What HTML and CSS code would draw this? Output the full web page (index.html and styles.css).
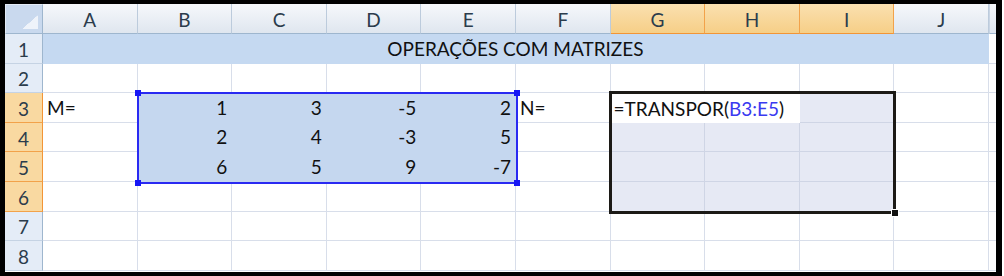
FILE: index.html
```html
<!DOCTYPE html>
<html lang="pt">
<head>
  <meta charset="UTF-8" />
  <title>Operações com matrizes</title>
  <link rel="stylesheet" href="styles.css">
</head>
<body>
  <div class="frame">
    <div class="sheet">
      <div class="grid">
        <div class="corner"></div>
        <div class="col-head">A</div>
        <div class="col-head">B</div>
        <div class="col-head">C</div>
        <div class="col-head">D</div>
        <div class="col-head">E</div>
        <div class="col-head">F</div>
        <div class="col-head on">G</div>
        <div class="col-head on">H</div>
        <div class="col-head on">I</div>
        <div class="col-head">J</div>
        <div class="col-head stub"></div>

        <div class="row-head">1</div>
        <div class="cell title">OPERAÇÕES COM MATRIZES</div>
        <div class="cell stub"></div>

        <div class="row-head">2</div>
        <div class="cell"></div><div class="cell"></div><div class="cell"></div><div class="cell"></div><div class="cell"></div>
        <div class="cell"></div><div class="cell"></div><div class="cell"></div><div class="cell"></div><div class="cell"></div>
        <div class="cell stub"></div>

        <div class="row-head on">3</div>
        <div class="cell">M=</div>
        <div class="cell fill num">1</div><div class="cell fill num">3</div><div class="cell fill num">-5</div><div class="cell fill num">2</div>
        <div class="cell">N=</div>
        <div class="cell pick"></div><div class="cell pick"></div><div class="cell pick"></div>
        <div class="cell"></div>
        <div class="cell stub"></div>

        <div class="row-head on">4</div>
        <div class="cell"></div>
        <div class="cell fill num">2</div><div class="cell fill num">4</div><div class="cell fill num">-3</div><div class="cell fill num">5</div>
        <div class="cell"></div>
        <div class="cell pick"></div><div class="cell pick"></div><div class="cell pick"></div>
        <div class="cell"></div>
        <div class="cell stub"></div>

        <div class="row-head on">5</div>
        <div class="cell"></div>
        <div class="cell fill num">6</div><div class="cell fill num">5</div><div class="cell fill num">9</div><div class="cell fill num">-7</div>
        <div class="cell"></div>
        <div class="cell pick"></div><div class="cell pick"></div><div class="cell pick"></div>
        <div class="cell"></div>
        <div class="cell stub"></div>

        <div class="row-head on">6</div>
        <div class="cell"></div><div class="cell"></div><div class="cell"></div><div class="cell"></div><div class="cell"></div>
        <div class="cell"></div>
        <div class="cell pick"></div><div class="cell pick"></div><div class="cell pick"></div>
        <div class="cell"></div>
        <div class="cell stub"></div>

        <div class="row-head">7</div>
        <div class="cell"></div><div class="cell"></div><div class="cell"></div><div class="cell"></div><div class="cell"></div>
        <div class="cell"></div><div class="cell"></div><div class="cell"></div><div class="cell"></div><div class="cell"></div>
        <div class="cell stub"></div>

        <div class="row-head">8</div>
        <div class="cell"></div><div class="cell"></div><div class="cell"></div><div class="cell"></div><div class="cell"></div>
        <div class="cell"></div><div class="cell"></div><div class="cell"></div><div class="cell"></div><div class="cell"></div>
        <div class="cell stub"></div>
      </div>

      <!-- selections drawn over the cells -->
      <div class="grid marks">
        <div class="range">
          <i class="tl"></i><i class="tr"></i><i class="bl"></i><i class="br"></i>
        </div>
        <div class="editor">=TRANSPOR(<span class="ref">B3:E5</span>)</div>
        <div class="active"><i class="handle"></i></div>
      </div>
    </div>
  </div>
</body>
</html>
```

FILE: styles.css
```css
body {
  margin: 0;
  background: #fff;
  font-family: Lato, "Liberation Sans", sans-serif;
}

.frame {
  width: 991px;
  height: 268px;
  border: 4px solid #000;
  border-left-width: 5px;
  border-right-width: 6px;
  overflow: hidden;
}

.sheet {
  position: relative;
  height: 100%;
}

.grid {
  display: grid;
  grid-template-columns: 38px repeat(10, 94.6px) 1fr;
  grid-template-rows: 30px repeat(8, 29.6px) 1fr;
  height: 100%;
  font-size: 19px;
  color: #111;
}

.corner {
  background: #c9d9ee;
  border: 1px solid #e3ebf6;
  border-right-color: #9eb6ce;
  border-bottom-color: #9eb6ce;
  position: relative;
}

.corner::after {
  content: "";
  position: absolute;
  right: 4px;
  bottom: 4px;
  width: 16px;
  height: 14px;
  background: linear-gradient(to bottom right, transparent 50%, #eef3fa 51%);
}

.col-head {
  display: flex;
  align-items: center;
  justify-content: center;
  background: linear-gradient(#f6f8fb, #dfe6ef);
  border-right: 1px solid #bccbdc;
  border-bottom: 1px solid #9eb6ce;
  color: #2b3c4c;
  padding-top: 1px;
}

.col-head.on {
  background: linear-gradient(#fae0b0, #f6cf87);
  border-right-color: #f2a24a;
  border-bottom-color: #f29536;
}

.col-head.stub {
  border-right: none;
  border-left: 1px solid #c9d5e4;
}

.row-head {
  display: flex;
  align-items: center;
  justify-content: center;
  background: #e4ecf7;
  border-right: 1px solid #9eb6ce;
  border-bottom: 1px solid #c5d3e4;
  color: #2b3c4c;
  padding-top: 2px;
}

.row-head.on {
  background: #f9d9a1;
  border-right-color: #f29536;
  border-bottom-color: #f2a24a;
}

.cell {
  display: flex;
  align-items: flex-end;
  padding: 0 4px 5px;
  border-right: 1px solid #d8deea;
  border-bottom: 1px solid #d8deea;
  line-height: 1;
  white-space: nowrap;
}

.cell.stub {
  border-right: none;
}

.num {
  justify-content: flex-end;
}

.fill {
  background: #c5d7ef;
  border-color: #c5d7ef;
}

.title {
  grid-column: span 10;
  justify-content: center;
  background: #c5d9f1;
  border-color: #c5d9f1;
}

.pick {
  background: #e6e9f4;
  border-color: #cfd5e5;
}

.marks {
  position: absolute;
  inset: 0;
  pointer-events: none;
}

.range {
  grid-column: 3 / 7;
  grid-row: 4 / 7;
  margin: -1px -2px -2px -1px;
  border: 2px solid #2a2af2;
  position: relative;
}

.range i {
  position: absolute;
  width: 6px;
  height: 6px;
  background: #1717f5;
}

.range .tl { left: -4px; top: -4px; }
.range .tr { right: -4px; top: -4px; }
.range .bl { left: -4px; bottom: -4px; }
.range .br { right: -4px; bottom: -4px; }

.editor {
  grid-column: 8 / 10;
  grid-row: 4 / 5;
  display: flex;
  align-items: flex-end;
  padding: 0 3px 5px;
  background: #fff;
  line-height: 1;
  white-space: nowrap;
}

.ref {
  color: #3a3af0;
}

.active {
  grid-column: 8 / 11;
  grid-row: 4 / 8;
  margin: -2px -2px -2px -2px;
  border: 3px solid #1c1a16;
  position: relative;
}

.handle {
  position: absolute;
  right: -6px;
  bottom: -6px;
  width: 6px;
  height: 6px;
  background: #111;
  border: 1px solid #fff;
}
```
